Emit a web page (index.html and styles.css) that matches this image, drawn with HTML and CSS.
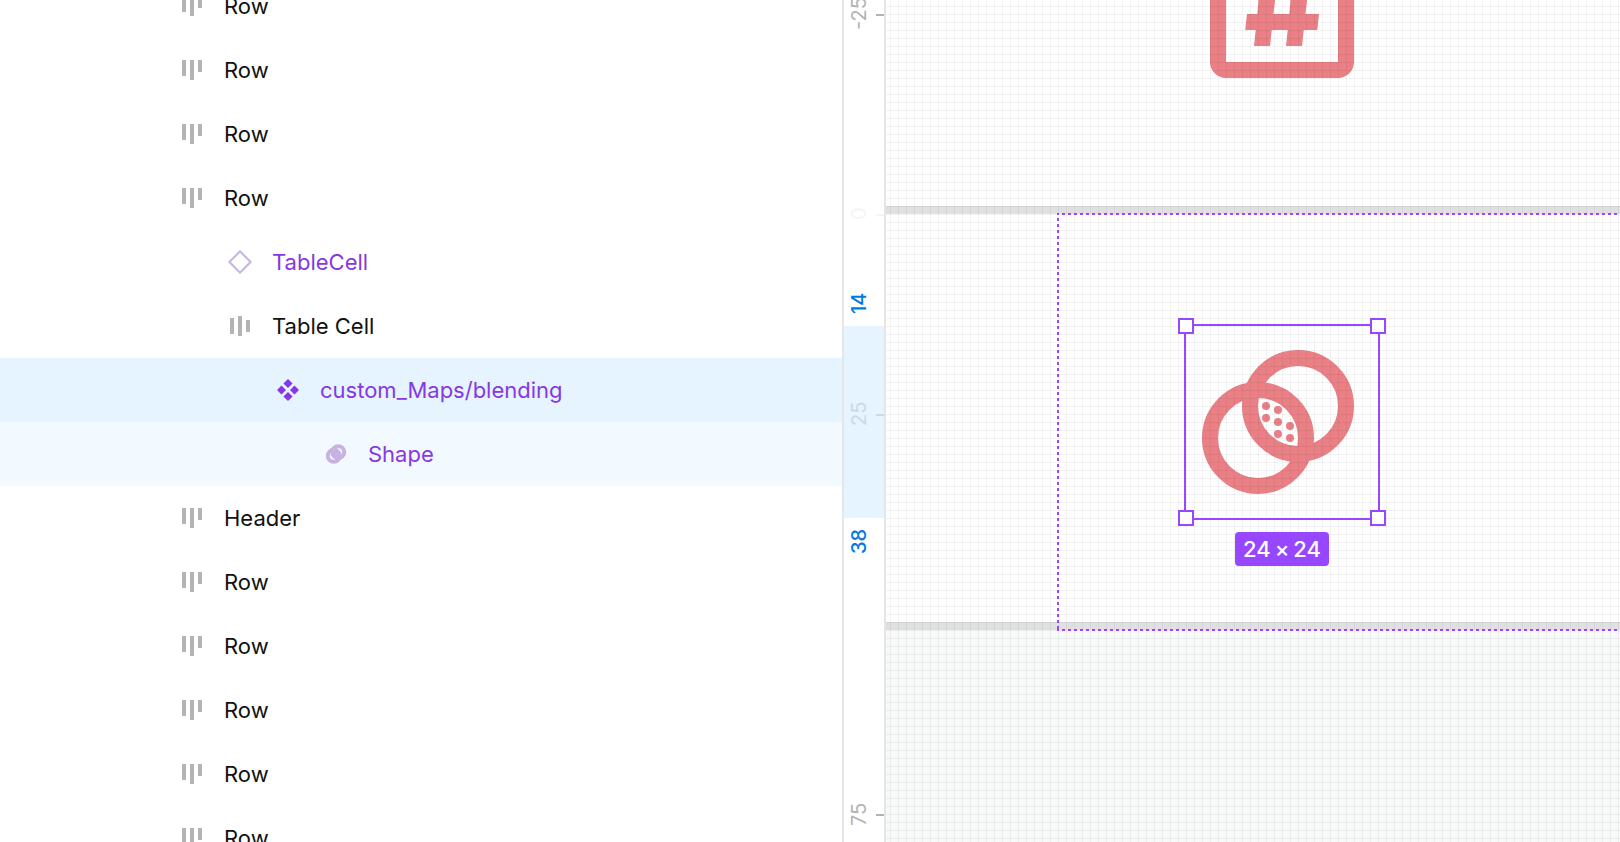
FILE: index.html
```html
<!DOCTYPE html>
<html lang="en">
<head>
<meta charset="utf-8">
<title>Layers and canvas</title>
<link rel="stylesheet" href="styles.css">
</head>
<body>
<svg class="defs" aria-hidden="true">
  <symbol id="row-top" viewBox="0 0 32 32"><path d="M6 6h4v16H6zM14 6h4v20h-4zM22 6h4v12h-4z"/></symbol>
  <symbol id="row-center" viewBox="0 0 32 32"><path d="M6 8h4v16H6zM14 6h4v20h-4zM22 10h4v12h-4z"/></symbol>
  <symbol id="instance" viewBox="0 0 32 32"><path d="M16 5.400 26.600 16 16 26.600 5.400 16z" fill="none" stroke="currentColor" stroke-width="2"/></symbol>
  <symbol id="component" viewBox="0 0 32 32"><path d="M16 5l4.600 4.500L16 14l-4.600-4.500zM16 18l4.600 4.500L16 27l-4.600-4.500zM9.500 11.400 14 16l-4.500 4.600L5 16zM22.500 11.400 27 16l-4.500 4.600L18 16z"/></symbol>
  <symbol id="boolean" viewBox="0 0 32 32"><g fill="none" stroke="currentColor" stroke-width="4"><circle cx="18.200" cy="14.200" r="6"/><circle cx="13.800" cy="17.800" r="6"/></g><path d="M13 12.400A5.400 5.400 0 0 1 19 19.600 5.400 5.400 0 0 1 13 12.400z"/></symbol>
</svg>
<main class="app">
  <nav class="layers" aria-label="Layers">
    <ul class="tree">
      <li><button class="layer"><svg class="icon"><use href="#row-top"/></svg>Row</button></li>
      <li><button class="layer"><svg class="icon"><use href="#row-top"/></svg>Row</button></li>
      <li><button class="layer"><svg class="icon"><use href="#row-top"/></svg>Row</button></li>
      <li><button class="layer"><svg class="icon"><use href="#row-top"/></svg>Row</button></li>
      <li><button class="layer depth-1 purple"><svg class="icon"><use href="#instance"/></svg>TableCell</button></li>
      <li><button class="layer depth-1"><svg class="icon"><use href="#row-center"/></svg>Table Cell</button></li>
      <li><button class="layer depth-2 purple selected"><svg class="icon"><use href="#component"/></svg>custom_Maps/blending</button></li>
      <li><button class="layer depth-3 purple child-selected"><svg class="icon"><use href="#boolean"/></svg>Shape</button></li>
      <li><button class="layer"><svg class="icon"><use href="#row-top"/></svg>Header</button></li>
      <li><button class="layer"><svg class="icon"><use href="#row-top"/></svg>Row</button></li>
      <li><button class="layer"><svg class="icon"><use href="#row-top"/></svg>Row</button></li>
      <li><button class="layer"><svg class="icon"><use href="#row-top"/></svg>Row</button></li>
      <li><button class="layer"><svg class="icon"><use href="#row-top"/></svg>Row</button></li>
      <li><button class="layer"><svg class="icon"><use href="#row-top"/></svg>Row</button></li>
    </ul>
  </nav>
  <aside class="ruler" aria-label="Vertical ruler">
    <div class="range"></div>
    <span class="mark at-minus-25">-25</span>
    <span class="mark at-0">0</span>
    <span class="mark at-25">25</span>
    <span class="mark at-75">75</span>
    <span class="mark bound at-14">14</span>
    <span class="mark bound at-38">38</span>
  </aside>
  <section class="canvas" aria-label="Canvas">
    <div class="cell cell-upper"></div>
    <div class="cell cell-current"></div>
    <svg class="tag-icon" viewBox="0 0 144 78">
      <path fill-rule="evenodd" d="M0 0H144V62a16 16 0 0 1-16 16H16A16 16 0 0 1 0 62zM16 0V62H128V0z"/>
      <path d="M48.500 0H65L63.500 14H79.300L80.500 0H97L95.500 14H109L107.300 30H93.700L92 46H76L77.700 30H61.700L60 46H44L45.700 30H35.200L37 14H47.300z"/>
    </svg>
    <svg class="blend-icon" viewBox="0 0 192 192">
      <g class="rings"><circle cx="112" cy="80" r="48"/><circle cx="72" cy="112" r="48"/></g>
      <circle cx="80" cy="80" r="4"/><circle cx="92" cy="84" r="4"/><circle cx="80" cy="92" r="4"/><circle cx="92" cy="96" r="4"/><circle cx="104" cy="100" r="4"/><circle cx="92" cy="108" r="4"/><circle cx="104" cy="112" r="4"/>
    </svg>
    <div class="pixel-grid"></div>
    <div class="parent-outline"></div>
    <div class="selection">
      <i class="handle nw"></i><i class="handle ne"></i><i class="handle sw"></i><i class="handle se"></i>
      <div class="size"><span>24</span> <span>×</span> <span>24</span></div>
    </div>
  </section>
</main>
</body>
</html>
```
FILE: styles.css
```css
* { box-sizing: border-box; }

body {
  margin: 0;
  font-family: Inter, "Liberation Sans", sans-serif;
  color: #111;
  background: #fff;
}

.defs { display: none; }

.app {
  display: grid;
  grid-template-columns: 842fr 44px 734fr;
  height: 100vh;
  overflow: hidden;
}

/* Layer tree */
.layers { overflow: hidden; }

.tree {
  list-style: none;
  margin: -26px 0 0;
  padding: 0;
}

.layer {
  display: flex;
  align-items: center;
  gap: 16px;
  width: 100%;
  height: 64px;
  padding: 0 16px 0 176px;
  border: 0;
  background: none;
  color: inherit;
  font: 400 22px/32px Inter, "Liberation Sans", sans-serif;
  text-align: left;
}

.icon {
  flex: none;
  width: 32px;
  height: 32px;
  color: #b3b3b3;
  fill: currentColor;
}

.depth-1 { padding-left: 224px; }
.depth-2 { padding-left: 272px; }
.depth-3 { padding-left: 320px; }
.purple { color: #8638e5; }
.purple .icon { color: #c7b2e0; }
.selected { background: #e5f4ff; }
.selected .icon { color: #8638e5; }
.child-selected { background: #f2f9ff; }

/* Ruler */
.ruler {
  position: relative;
  overflow: hidden;
  border: solid #e6e6e6;
  border-width: 0 2px;
}

.range {
  position: absolute;
  top: 326px;
  width: 100%;
  height: 192px;
  background: #e5f4ff;
}

.mark {
  position: absolute;
  right: 0;
  display: flex;
  align-items: center;
  justify-content: center;
  width: 100%;
  height: 48px;
  margin-top: -24px;
  padding-left: 10px;
  writing-mode: vertical-rl;
  transform: rotate(180deg);
  font-size: 20px;
  line-height: 24px;
  color: #b3b3b3;
}

.mark::after {
  content: "";
  position: absolute;
  left: 0;
  top: 22px;
  width: 8px;
  height: 2px;
  background: currentColor;
}

.bound { color: #007be5; font-weight: 500; }
.bound::after { display: none; }
.at-minus-25 { top: 14px; }
.at-0 { top: 214px; color: #f5f5f5; }
.at-14 { top: 303px; }
.at-25 { top: 414px; color: #ccd9e3; }
.at-38 { top: 541px; }
.at-75 { top: 814px; }

/* Canvas */
.canvas {
  position: relative;
  overflow: hidden;
  background: #f8faf9;
}

.cell {
  background: #fff;
  border-bottom: 8px solid #e0e0e0;
}

.cell-upper { height: 214px; }
.cell-current { height: 416px; }

.pixel-grid {
  position: absolute;
  inset: 0;
  background-image:
    linear-gradient(to right, rgba(0, 0, 0, 0.05) 1px, transparent 1px),
    linear-gradient(to bottom, rgba(0, 0, 0, 0.05) 1px, transparent 1px);
  background-size: 8px 8px;
  background-position: 4px 6px;
}

.tag-icon,
.blend-icon {
  position: absolute;
  fill: #ea8085;
}

.tag-icon {
  left: 324px;
  top: 0;
  width: 144px;
  height: 78px;
}

.blend-icon {
  left: 300px;
  top: 326px;
  width: 192px;
  height: 192px;
}

.rings {
  fill: none;
  stroke: #ea8085;
  stroke-width: 16;
}

.parent-outline {
  --dash: #9747ff 0 3px, transparent 3px 6px;
  position: absolute;
  left: 171px;
  right: 0;
  top: 213px;
  height: 418px;
  background:
    repeating-linear-gradient(to right, var(--dash)) -1px 0 / 1200px 2px repeat-x,
    repeating-linear-gradient(to right, var(--dash)) -1px 100% / 1200px 2px repeat-x,
    repeating-linear-gradient(to bottom, var(--dash)) 0 -1px / 2px 1200px repeat-y;
}

.selection {
  position: absolute;
  left: 298px;
  top: 324px;
  width: 196px;
  height: 196px;
  border: 2px solid #9747ff;
}

.handle {
  position: absolute;
  width: 16px;
  height: 16px;
  border: 2px solid #9747ff;
  background: #fff;
}

.nw, .ne { top: -8px; }
.sw, .se { bottom: -8px; }
.nw, .sw { left: -8px; }
.ne, .se { right: -8px; }

.size {
  position: absolute;
  top: 206px;
  left: 50%;
  transform: translateX(-50%);
  display: flex;
  gap: 4px;
  padding: 0 8px;
  border-radius: 4px;
  background: #9747ff;
  color: #fff;
  font-size: 22px;
  font-weight: 500;
  line-height: 34px;
  white-space: nowrap;
}
```
